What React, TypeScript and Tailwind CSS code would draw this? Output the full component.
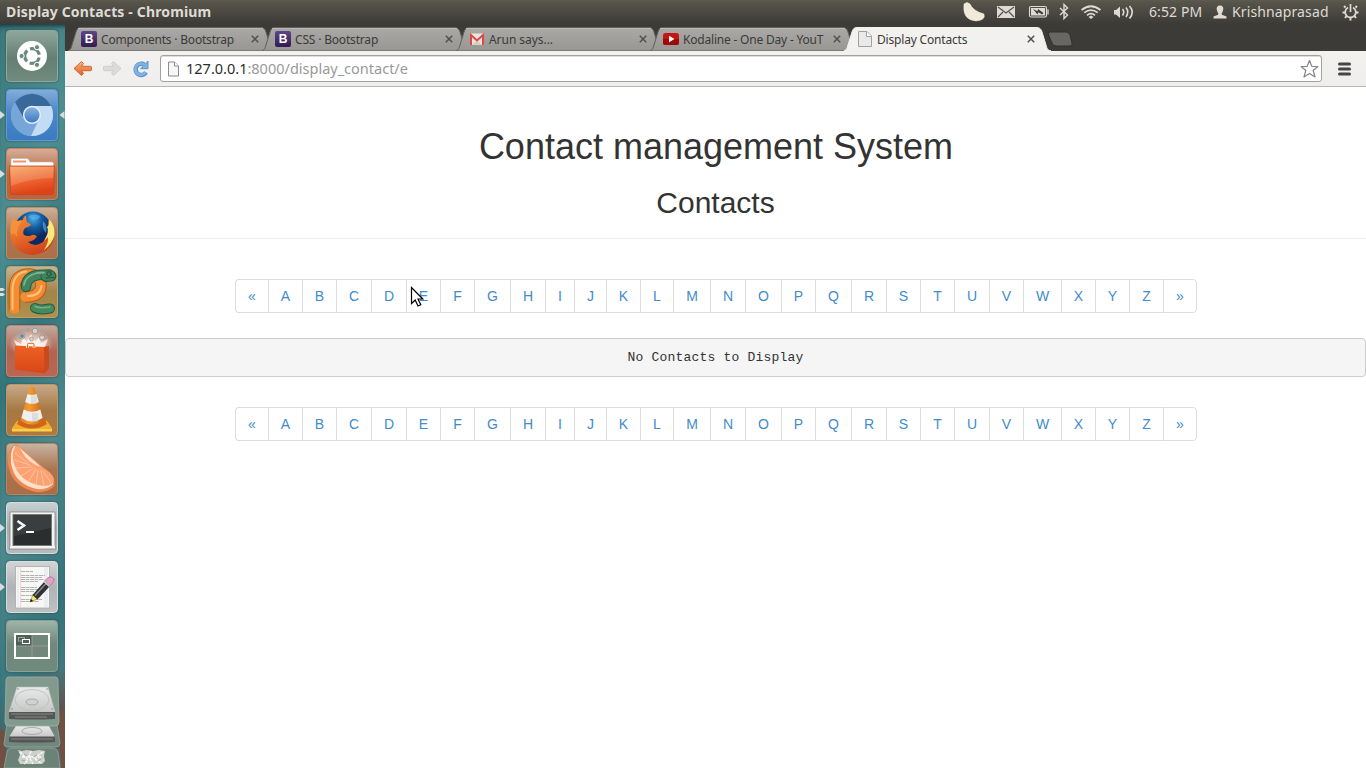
import React from "react";

const LETTERS = ["«", ..."ABCDEFGHIJKLMNOPQRSTUVWXYZ".split(""), "»"];

/* ---------- Launcher icons (52 x 52 grid) ---------- */

const Ubuntu = () => (
  <>
    <circle cx="26" cy="26" r="15" fill="#fff" />
    <circle cx="26" cy="26" r="7.3" fill="none" stroke="#6c897e" strokeWidth="3.2" strokeDasharray="12.3 3" strokeDashoffset="-1.5" />
    <g fill="#6c897e" stroke="#fff" strokeWidth="1">
      <circle cx="15.6" cy="26" r="2.6" />
      <circle cx="31" cy="17.2" r="2.6" />
      <circle cx="31" cy="34.8" r="2.6" />
    </g>
  </>
);

const ChromiumIcon = () => (
  <>
    <circle cx="26" cy="26" r="21" fill="#8fb9e2" />
    <path d="M26 17H45A21 21 0 0 1 25 47L33 31Z" fill="#c2dcf4" />
    <path d="M9 13.5A21 21 0 0 1 45 17H26A9 9 0 0 0 17.5 29Z" fill="#39689b" />
    <path d="M9 13.5 17.5 30A9 9 0 0 0 30.500 34L25 47A21 21 0 0 1 9 13.5Z" fill="#76a6d8" />
    <circle cx="26" cy="25.8" r="9" fill="#e8f2fc" />
    <circle cx="26" cy="25.8" r="7.6" fill="url(#ball)" />
  </>
);

const Folder = () => (
  <>
    <path d="M5 19V11.5Q5 10.5 6 10.5H21Q22.500 10.500 23 12L24 14H46Q47.500 14 47.500 15.500V19Z" fill="#fff" stroke="#d4b39f" strokeWidth=".6" />
    <rect x="7" y="12.500" width="13" height="2" fill="#ee9563" />
    <path d="M3.500 18H48.500L47.500 45.500Q47.400 46.500 46.400 46.500H5.600Q4.600 46.500 4.500 45.500Z" fill="url(#folder)" stroke="#c8441e" strokeWidth=".8" />
    <path d="M4.300 19H47.700L47.200 30Q25 30 5 38Z" fill="#fff" opacity=".16" />
  </>
);

const Firefox = () => (
  <>
    <circle cx="27" cy="23" r="18.500" fill="url(#globe)" />
    <path d="M22 9Q28 6 34 9 33 14 25 12ZM37 14Q42 19 40 26 36 22 37 14Z" fill="#5db4ec" opacity=".6" />
    <path d="M6.500 11 11 14Q14 13 17 13 17 10 20 8.500 20 13 21 15 25 17 25 18 23 20 19 21 16 25 18 28 23 30 26 28 29 27 31 29.500 28 34 22 35 29 41 37 35 44 28 42 13 50 23 48 31 45 46 27 48 11 47 6 35 3 28 5 21 5 16 6.500 11Z" fill="url(#fox)" />
    <path d="M43 12Q49 18 48.500 28 46 37 38 43 43 35 42 30L38 34Q44 24 41 20Q44 18 43 12Z" fill="#fbe97a" />
    <path d="M6.500 11 11 14 16 14Q10 22 11 30 8 24 5 28 3 19 6.500 11Z" fill="#f59a42" opacity=".7" />
  </>
);

const PyCharm = () => (
  <g fill="none" strokeLinecap="round" strokeLinejoin="round">
    <path d="M29 42Q34 44.500 44 42.500" stroke="#235c3c" strokeWidth="10" />
    <path d="M29 42Q34 44.500 44 42.500" stroke="#47885f" strokeWidth="8" />
    <path d="M29 40.500Q34 42.500 44 41" stroke="#74b088" strokeWidth="1.500" />
    <path d="M8.500 43.500V22Q9 8 23 8 35 9 35 20 34 31 19 31" stroke="#b95812" strokeWidth="11.500" strokeLinecap="butt" />
    <path d="M8.500 43V22Q9 8 23 8 35 9 35 20 34 31 19 31" stroke="#f58c32" strokeWidth="9.500" />
    <path d="M6.500 43V22Q8 7 20 5.500M22 30Q34 30 35.500 20" stroke="#ffc17c" strokeWidth="2" />
    <path d="M20 21Q20 11 32 9L43 8.500" stroke="#235c3c" strokeWidth="10.500" />
    <path d="M20 21Q20 11 32 9L43 8.500" stroke="#428460" strokeWidth="8.500" />
    <path d="M40 10.500 45 10" stroke="#235c3c" strokeWidth="11" />
    <path d="M40 10 44.500 10" stroke="#428460" strokeWidth="9.500" />
    <path d="M18 19Q19 10 31 7L38 6.500" stroke="#79b58f" strokeWidth="1.800" />
    <circle cx="43" cy="8" r="2.200" stroke="#1e4f37" />
    <path d="M40 12 48 11.500" stroke="#1e4f37" strokeWidth=".9" />
  </g>
);

const Bag = () => (
  <>
    <ellipse cx="25" cy="19" rx="22" ry="14" fill="url(#glow)" />
    <path d="M11 22 8 15 15 19 17 12 21 17 25 9 29 17 33 12 35 18 42 14 39 22Z" fill="#fff" opacity=".75" />
    <g fill="#d0d3d4" stroke="#84807f" strokeWidth=".6">
      <circle cx="16" cy="11" r="3" /><circle cx="29" cy="6" r="2.800" /><circle cx="25.500" cy="14" r="2" /><circle cx="36" cy="12.500" r="2.500" /><circle cx="42" cy="8" r="1" /><circle cx="22" cy="5" r="1" />
    </g>
    <circle cx="16" cy="11" r="2" fill="#6489a5" />
    <path d="M9 20.500 38 22 43 21V43L38.500 48.500 9 44.500Z" fill="url(#bag)" />
    <path d="M38 22 43 21V43L38.500 48.500Z" fill="#c94a20" />
    <path d="M21.500 23V19.300Q21.500 18.300 22.500 18.300H27Q28 18.300 28 19.300V23" fill="none" stroke="#fff0df" strokeWidth="2.600" />
    <path d="M21.500 23V19.300Q21.500 18.300 22.500 18.300H27Q28 18.300 28 19.300V23" fill="none" stroke="#e0622e" strokeWidth="1" />
  </>
);

const Vlc = () => (
  <>
    <path d="M11 37H41L46 44V47H6V44Z" fill="#f5ad2b" />
    <path d="M6 45H46V47.500H6Z" fill="#fcd04a" />
    <path d="M14 34Q26 42 38 34L41 40Q26 49 11 40Z" fill="#cf651b" />
    <path d="M23.500 4Q26 2 28.500 4L37.500 37Q26 44 14.500 37Z" fill="url(#cone)" />
    <path d="M21.500 10Q26 12 30.500 10L32.800 18Q26 22 19.200 18ZM17.700 25.500Q26 30 34.300 25.500L36.600 34Q26 41 15.400 34Z" fill="#eef0ef" />
    <path d="M28 11.500V20M29 29V38" stroke="#c7cac9" strokeWidth="6" opacity=".45" />
  </>
);

const Clementine = () => (
  <>
    <path d="M8 2Q1 7 2 21 5 43 29 49 42 50 48 43 50 38 45 31L13 3Q10 1 8 2Z" fill="#ec8953" />
    <path d="M8 3Q4 8 5 20 8 41 31 46 42 47 47 41L45 33 13 4Z" fill="#ffe0ca" />
    <path d="M10 3Q14 3 16 9 22 20 35 24 46 29 48 36 48 43 38 43 12 40 7 17 6 7 10 3Z" fill="#fba172" />
    <path d="M9 10 22 20M8 17 24 22M10 25 26 24M15 33 28 25M22 39 30 26M30 42 32 27M38 43 35 27M45 40 37 28" stroke="#ffceb1" strokeWidth=".7" />
  </>
);

const Terminal = () => (
  <>
    <path d="M4 10H49V43L50 47H3L4 43Z" fill="#f4f4f3" stroke="#777" strokeWidth=".7" />
    <rect x="7" y="12.500" width="38.500" height="31" fill="#2b2e2e" stroke="#777" />
    <path d="M8 13H45V26L8 34Z" fill="#fff" opacity=".08" />
    <path d="M11.500 19 18 23.500 11.500 28" fill="none" stroke="#fff" strokeWidth="2.500" />
    <path d="M20 30H28" stroke="#fff" strokeWidth="2" />
  </>
);

const Editor = () => (
  <>
    <rect x="9.500" y="5.500" width="34" height="41.500" fill="#f7f7f6" stroke="#aaa" strokeWidth=".8" />
    <path d="M14.500 6V47" stroke="#f1c8c5" strokeWidth=".8" />
    <path d="M12 6V47M39 6V47M41 6V47" stroke="#d3deee" strokeWidth=".7" />
    <path d="M15 10.500H27M15 14.500H39M15 16.500H36M15 18.500H38M15 20.500H32M15 26.500H31M15 28.500H34M15 30.500H28M15 34.500H31M15 38.500H36M15 40.500H33" stroke="#b0b2b3" strokeWidth="1" strokeDasharray="4 .5" />
    <path d="M24 41 27 33.500 31.500 38Z" fill="#f2e660" stroke="#7e7934" strokeWidth=".6" />
    <path d="M26.500 34 38 21 43.500 25.500 31.500 38.500Z" fill="#303132" />
    <path d="M29 34.500 40 22.500" stroke="#858887" strokeWidth="1.500" />
    <path d="M38.500 20 41 17.500Q45 14 48 18 48.500 20 44 25Z" fill="#e59fc6" stroke="#9c7489" strokeWidth=".7" />
    <path d="M38 20.500 43.500 25.500" stroke="#ccc" strokeWidth="1.600" />
    <path d="M24 41 25 38 27 40Z" fill="#111" />
  </>
);

const Workspaces = () => (
  <>
    <rect x="9" y="14" width="34" height="24" fill="#72877c" />
    <rect x="9" y="14" width="17" height="12" fill="#4e6058" />
    <path d="M26 14V38M9 26H43" stroke="#a69da3" strokeWidth=".8" />
    <rect x="9" y="14" width="34" height="24" fill="none" stroke="#fff" strokeWidth="2" />
    <rect x="12.500" y="17.500" width="6" height="3.500" fill="none" stroke="#9aa39f" />
    <rect x="16.500" y="19.500" width="7" height="4" fill="#4e6058" stroke="#fff" />
  </>
);

const TILES: { name: string; bg: string; arrow?: string; Icon: React.FC }[] = [
  { name: "home", bg: "bg-[linear-gradient(#8fa69c,#647e72_55%,#718b80)] border-[#91a79d]", Icon: Ubuntu },
  { name: "chromium", bg: "bg-[linear-gradient(#83acd9,#4c87c8_45%,#3c7bc1)] border-[#5e98d8]", arrow: "both", Icon: ChromiumIcon },
  { name: "files", bg: "bg-[linear-gradient(#d5ad98,#b66943_50%,#b7673f)] border-[#cb835f]", arrow: "left", Icon: Folder },
  { name: "firefox", bg: "bg-[linear-gradient(#ceb097,#a87854_50%,#ac7048)] border-[#bd8d68]", Icon: Firefox },
  { name: "pycharm", bg: "bg-[linear-gradient(#c5b394,#a28349_50%,#b2904c)] border-[#baa169]", arrow: "double", Icon: PyCharm },
  { name: "software", bg: "bg-[linear-gradient(#c0aaa0,#ae6652_50%,#bb6651)] border-[#c9806c]", Icon: Bag },
  { name: "vlc", bg: "bg-[linear-gradient(#c6aa88,#a77843_50%,#ae7840)] border-[#c19562]", Icon: Vlc },
  { name: "clementine", bg: "bg-[linear-gradient(#c7b3a2,#aa754f_50%,#ac6d44)] border-[#bb845d]", Icon: Clementine },
  { name: "terminal", bg: "bg-[linear-gradient(#c6cfd1,#a6acae_50%,#b7bbbd)] border-[#d7dcdd]", arrow: "left", Icon: Terminal },
  { name: "editor", bg: "bg-[linear-gradient(#d0d4d5,#b0b4b6_50%,#bec0c1)] border-[#d8dcdc]", arrow: "left", Icon: Editor },
  { name: "workspaces", bg: "bg-[linear-gradient(#9fb5a9,#71887c_45%,#708a7e)] border-[#88a195]", Icon: Workspaces },
];

function Defs() {
  return (
    <svg className="absolute h-0 w-0" aria-hidden="true">
      <defs>
        <linearGradient id="ball" x2="0" y2="1"><stop stopColor="#8ab4e4" /><stop offset="1" stopColor="#3f79be" /></linearGradient>
        <linearGradient id="folder" x2=".3" y2="1"><stop stopColor="#f5a359" /><stop offset=".55" stopColor="#ee6831" /><stop offset="1" stopColor="#df4217" /></linearGradient>
        <radialGradient id="globe" cx=".5" cy=".2"><stop stopColor="#4aa9e4" /><stop offset=".5" stopColor="#125b9f" /><stop offset="1" stopColor="#0b2a61" /></radialGradient>
        <radialGradient id="glow"><stop stopColor="#fff" /><stop offset=".5" stopColor="#ffe6d4" stopOpacity=".6" /><stop offset="1" stopColor="#ffe6d4" stopOpacity="0" /></radialGradient>
        <linearGradient id="fox" x2=".4" y2="1"><stop stopColor="#ee8a34" /><stop offset=".5" stopColor="#e8702a" /><stop offset="1" stopColor="#d2451c" /></linearGradient>
        <linearGradient id="bag" x2="0" y2="1"><stop stopColor="#ed6222" /><stop offset="1" stopColor="#d94618" /></linearGradient>
        <linearGradient id="cone"><stop stopColor="#e88125" /><stop offset=".4" stopColor="#f69a2f" /><stop offset="1" stopColor="#c96212" /></linearGradient>
        <linearGradient id="metal" x2="0" y2="1"><stop stopColor="#e9eae9" /><stop offset="1" stopColor="#c6c8c7" /></linearGradient>
        <linearGradient id="tab" x2="0" y2="1"><stop stopColor="#aaa9a7" /><stop offset="1" stopColor="#979693" /></linearGradient>
        <linearGradient id="back" x2="0" y2="1"><stop stopColor="#f8b27c" /><stop offset="1" stopColor="#df6325" /></linearGradient>
      </defs>
    </svg>
  );
}

function Launcher() {
  return (
    <aside className="flex w-[65px] shrink-0 flex-col overflow-hidden bg-[radial-gradient(circle_at_80%_94%,#6a4038_0,#6a403800_8%),linear-gradient(115deg,#3b777b,#4e8e91_25%,#34757b_42%,#4d898d_60%,#35727a_80%,#5b8083)] pt-[6px] shadow-[inset_0_6px_5px_-4px_#173234]">
      <div className="flex flex-col gap-[7px]">
        {TILES.map(({ name, bg, arrow, Icon }) => (
          <div key={name} className="flex h-[52px] items-center">
            <div className="w-[6px]">
              {arrow && (
                <svg width="6" height="10" viewBox="0 0 6 10">
                  <path d={arrow === "double" ? "M0 1H3L5 2.500 3 4H0ZM0 6H3L5 7.500 3 9H0Z" : "M0 1 5 5 0 9Z"} fill="#d9dddd" />
                </svg>
              )}
            </div>
            <div className={`h-[52px] w-[52px] rounded-[4px] border shadow-[0_0_2px_#24484b] ${bg}`}>
              <svg className="-m-px max-w-none" width="52" height="52" viewBox="0 0 52 52"><Icon /></svg>
            </div>
            {arrow === "both" && <svg width="7" height="10" viewBox="0 0 7 10"><path d="M6.500 1 1.500 5 6.500 9Z" fill="#d9dddd" /></svg>}
          </div>
        ))}
      </div>
      <svg className="mt-[4px] shrink-0" width="65" height="92" viewBox="0 0 65 92">
        <path d="M0 53H4L8 92H0ZM58 35H65V92H61Z" fill="#6e5143" />
        <path d="M11 72H53Q58 73 58 76L60 92H4L7 76Q7 73 11 72Z" fill="#6b8276" stroke="#93a69c" strokeWidth=".8" />
        <path d="M18 74 22 75 27 74 33 75 39 74 45 75 44 80 45 85 42 88 20 88 18 84 20 79Z" fill="#cdd1ce" />
        <path d="M20 76 28 84 24 88M43 76 34 82 41 87M31 75 29 81 33 88M22 81H42" fill="none" stroke="#f7f8f7" strokeWidth="1.500" strokeDasharray="3 1" />
        <path d="M24 78 27 80M37 79 34 81M25 85 22 84M38 85 41 83" stroke="#9ba39e" />
        <path d="M7 48H57L60 67Q60 71 56 71H8Q4 71 4 68Z" fill="#6f887b" stroke="#94a89e" strokeWidth=".8" />
        <path d="M16 50H49L55 61H9Z" fill="url(#metal)" /><path d="M9 60.500H55V66Q32 67 9 66Z" fill="#555" /><path d="M11 63H53" stroke="#888" />
        <ellipse cx="32" cy="55" rx="10" ry="3.500" fill="none" stroke="#aaa" />
        <path d="M9 1H55Q58 1 58 4L59 46Q59 50 55 50H9Q5 50 5 46L6 4Q6 1 9 1Z" fill="#829a8e" stroke="#9eb1a7" strokeWidth=".8" />
        <path d="M17 11H48L55 36H9Z" fill="url(#metal)" stroke="#b7bcb9" strokeWidth=".6" />
        <path d="M9 36H55V43Q32 44 9 43Z" fill="#555755" /><path d="M11 38H53M15 41H47" stroke="#888" />
        <ellipse cx="32" cy="24" rx="17" ry="10.500" fill="none" stroke="#c0c3c1" />
        <ellipse cx="32" cy="26" rx="6" ry="3" fill="#d0d2d1" stroke="#a6aaa7" />
        <circle cx="18" cy="13" r=".8" fill="#888" /><circle cx="47" cy="13" r=".8" fill="#888" /><circle cx="12" cy="33" r=".8" fill="#888" /><circle cx="52" cy="33" r=".8" fill="#888" />
      </svg>
    </aside>
  );
}

/* ---------- System panel ---------- */

function TopPanel() {
  return (
    <header className="relative flex h-6 shrink-0 items-center justify-between bg-[linear-gradient(#5d5a4d,#55534a_12%,#3c3b37)] pl-[6px] font-['Noto_Sans'] text-[#dfdbd2]">
      <span className="text-[14px] leading-6 font-bold tracking-[0.15px] whitespace-nowrap">Display Contacts - Chromium</span>
      <svg className="absolute top-0 left-[960px]" width="180" height="24" viewBox="960 0 180 24" fill="none" stroke="#dfdbd2">
        <path d="M964 4Q967 1 970 4 973 11 984 14 986 20 976 21 962 20 964 4Z" fill="#f0ead9" stroke="#f7eddb" strokeWidth=".5" />
        <rect x="997" y="6" width="18" height="12" fill="#dfdbd2" stroke="none" />
        <path d="M998 7 1006 13 1014 7M998 17 1003 12M1014 17 1009 12" stroke="#55524c" strokeWidth="1.200" />
        <rect x="1029.500" y="6.500" width="17" height="10.500" rx="1.500" strokeWidth="1.100" />
        <rect x="1031" y="8" width="14" height="7.500" fill="#dfdbd2" stroke="none" />
        <path d="M1048 9.500V14.500" strokeWidth="1.300" />
        <path d="M1033 9 1037.500 11.200 1038 9 1043.500 13 1042 14.500 1038.500 12.300 1037.500 14.500Z" fill="#3f3d39" stroke="none" />
        <path d="M1060 8 1067.500 15 1064 18.500V4.500L1067.500 8 1060 15" strokeWidth="1.400" />
        <path d="M1081.500 10Q1091 2.500 1100.500 10M1084.300 12.700Q1091 7.500 1097.700 12.700M1087 15.300Q1091 12 1095 15.300" strokeWidth="1.700" />
        <path d="M1088.500 17 1091 15.500 1093.500 17 1091 19Z" fill="#dfdbd2" stroke="none" />
        <path d="M1114 10H1116L1120 6.500V18L1116 14.500H1114Z" fill="#dfdbd2" stroke="none" />
        <path d="M1122.500 9Q1125 12 1122.500 15.500M1126 7.500Q1129.500 12 1126 17M1129.500 6Q1135 12 1129.500 18.500" strokeWidth="1.600" />
      </svg>
      <div className="flex items-center pr-[7px] text-[14px] leading-6 whitespace-nowrap">
        <span className="w-[64px] tracking-[0.1px]">6:52 PM</span>
        <svg width="14" height="14" viewBox="0 0 14 14" className="mr-[5px]"><path d="M7 .5C10 .5 10.800 3 10 5.500Q9.500 7.500 8.700 8.200L8.900 9.800 13.500 11.500V13.500H.5V11.500L5.100 9.800 5.300 8.200Q4.500 7.500 4 5.500C3.200 3 4 .5 7 .5Z" fill="#dfdbd2" /></svg>
        <span className="w-[110px] tracking-[0.12px]">Krishnaprasad</span>
        <svg width="17" height="18" viewBox="0 0 17 18" fill="none" stroke="#dfdbd2" strokeWidth="1.700">
          <path d="M6 4.500A5.300 5.300 0 1 0 11 4.500M8.500 1V9" />
          <path d="M3.500 4.500 2 3M13.500 4.500 15 3M3 9.500H.5M14 9.500H16.500M4.500 13 3 15M12.500 13 14 15M8.500 15V17.500" strokeWidth="2" />
        </svg>
      </div>
    </header>
  );
}

/* ---------- Browser chrome ---------- */

const BootstrapIcon = () => (
  <span className="flex h-4 w-4 items-center justify-center rounded-[2px] bg-[linear-gradient(#5e4688,#321b4f)] font-['Liberation_Sans'] text-[12px] leading-4 font-bold text-white">B</span>
);
const GmailIcon = () => (
  <svg width="16" height="16" viewBox="0 0 16 16"><path d="M1 2.500H15V14H1Z" fill="#ece4e0" /><path d="M3 14 8 9 13 14" fill="#d5cfcb" /><path d="M2 14V4L8 9.500 14 4V14" fill="none" stroke="#dc4a41" strokeWidth="2" /></svg>
);
const YoutubeIcon = () => (
  <svg width="16" height="16" viewBox="0 0 16 16"><rect y="2" width="16" height="12" rx="2.500" fill="#c51414" /><path d="M0 8H16V11.500Q16 14 13.500 14H2.500Q0 14 0 11.500Z" fill="#9f0909" /><path d="M6 4.800 11.500 8 6 11.200Z" fill="#fff" /></svg>
);
const PageIcon = () => (
  <svg width="16" height="16" viewBox="0 0 16 16"><path d="M1.500.5H10L14.500 5V15.500H1.500Z" fill="#e9e9e9" stroke="#a0a0a0" /><path d="M9.500.5V5.500H14.500" fill="#fff" stroke="#a0a0a0" /></svg>
);

const TABS = [
  { label: "Components · Bootstrap", Icon: BootstrapIcon, track: "tracking-[-0.2px]" },
  { label: "CSS · Bootstrap", Icon: BootstrapIcon, track: "tracking-[-0.18px]" },
  { label: "Arun says...", Icon: GmailIcon, track: "tracking-[-0.05px]" },
  { label: "Kodaline - One Day - YouT", Icon: YoutubeIcon, track: "tracking-[-0.2px]" },
  { label: "Display Contacts", Icon: PageIcon, track: "tracking-[-0.18px]", active: true },
];

function TabStrip() {
  return (
    <div className="flex h-[27px] shrink-0 items-end bg-[#3c3b37] pl-[3px]">
      {TABS.map(({ label, Icon, track, active }) => (
        <div key={label} className={`relative flex h-[24px] w-[194px] items-center pl-[13px] ${active ? "z-10" : ""}`}>
          <svg className="absolute top-0 left-0" width="208" height="24" viewBox="0 0 208 24">
            <path d="M-1 24C3 23 3 21 4 18L8 5C9 2 10 .5 13 .5H192C196 .5 197 2 198 5L202 18C203 21 203 23 207 24Z" fill={active ? "#f2f1f0" : "url(#tab)"} stroke={active ? "#f2f1f0" : "#62615e"} />
            {!active && <path d="M10 1.500H195" stroke="#bab9b7" />}
          </svg>
          <div className="relative flex w-full items-center">
            <Icon />
            <span className={`ml-[4px] pt-px font-['Noto_Sans'] text-[12px] leading-[20px] whitespace-nowrap text-[#3c3b37] ${track}`}>{label}</span>
          </div>
          <span className="absolute top-[2px] -right-[7px] flex h-5 w-[18px] items-center">
            <svg width="8" height="8" viewBox="0 0 8 8"><path d="M.8.8 7.200 7.200M7.200.8.8 7.200" stroke="#51504d" strokeWidth="1.500" /></svg>
          </span>
        </div>
      ))}
      <svg className="mb-[3px] ml-[8px]" width="28" height="18" viewBox="0 0 28 18"><path d="M4 2H20Q23 2 24 5L26 13Q27 16 24 16H10Q7 16 6 13L2.500 5Q1.500 2 4 2Z" fill="#686763" stroke="#31302d" /></svg>
    </div>
  );
}

function Toolbar() {
  return (
    <div className="flex h-[36px] shrink-0 items-center border-b border-[#b9b7b5] bg-[linear-gradient(#f2f1f0,#f0eeed)] pl-[8px]">
      <svg width="20" height="18" viewBox="0 0 20 18"><path d="M1 8.500 8.500 1.500 10.500 3.500 8.500 6.300H17.500Q18.500 6.300 18.500 7.300V9.700Q18.500 10.700 17.500 10.700H8.500L10.500 13.500 8.500 15.500Z" fill="url(#back)" stroke="#c95e25" strokeWidth=".9" strokeLinejoin="round" /></svg>
      <svg className="ml-[9px]" width="20" height="18" viewBox="0 0 20 18"><path d="M19 8.500 11.500 1.500 9.500 3.500 11.500 6.300H2.500Q1.500 6.300 1.500 7.300V9.700Q1.500 10.700 2.500 10.700H11.500L9.500 13.500 11.500 15.500Z" fill="#dcdbd9" stroke="#cccbc9" strokeWidth=".9" strokeLinejoin="round" /></svg>
      <svg className="ml-[10px]" width="18" height="18" viewBox="0 0 18 18"><path d="M12.500 4.800A5.600 5.600 0 1 0 14 12.300" fill="none" stroke="#5590c8" strokeWidth="4.400" /><path d="M16 1V8.700H8.500L11 6.500 13.500 4Z" fill="#7fb2e3" stroke="#5590c8" strokeWidth=".9" /><path d="M12.800 5.200A5.600 5.600 0 1 0 13.700 12" fill="none" stroke="#7fb2e3" strokeWidth="2.800" /></svg>
      <div className="ml-[10px] flex h-[27px] w-[1162px] items-center rounded-[3px] border border-[#a3a19e] bg-white pl-[6px] shadow-[inset_0_1px_0_#ddd]">
        <svg width="13" height="16" viewBox="0 0 13 16"><path d="M1.500 1H7.500L11.500 5V15H1.500Z" fill="#f7f7f7" stroke="#8b8b8b" /><path d="M7.500 1V5H11.500" fill="#fff" stroke="#8b8b8b" /></svg>
        <span className="ml-[6px] font-['Noto_Sans'] text-[14.500px] leading-[25px] text-[#999]"><span className="text-[#2c2c2c]">127.0.0.1</span>:8000/display_contact/e</span>
        <svg className="mr-[2px] ml-auto" width="20" height="20" viewBox="0 0 20 20"><path d="M10.500 1.500 12.800 7.300 18.800 7.500 14.200 11.500 16 18 10.500 14.500 5 18 6.800 11.500 2.200 7.500 8.200 7.300Z" fill="#fff" stroke="#858585" strokeWidth="1.200" strokeLinejoin="round" /></svg>
      </div>
      <svg className="ml-[16px]" width="13" height="14" viewBox="0 0 13 14"><path d="M1.500 2H11.500M1.500 7H11.500M1.500 12H11.500" stroke="#454545" strokeWidth="3" strokeLinecap="round" /></svg>
    </div>
  );
}

/* ---------- Page ---------- */

function Pagination() {
  return (
    <ul className="grid grid-cols-[33px_34px_34px_35px_35px_34px_34px_36px_35px_29px_32px_34px_33px_37px_35px_36px_34px_36px_35px_34px_34px_35px_34px_38px_34px_34px_34px_34px] justify-center pl-px text-[14px] leading-[20px] text-[#428bca]">
      {LETTERS.map((c) => (
        <li key={c} className="border-y border-l border-[#ddd] bg-white py-[6px] text-center first:rounded-l-[4px] last:rounded-r-[4px] last:border-r">{c}</li>
      ))}
    </ul>
  );
}

function Page() {
  return (
    <main className="relative flex-1 bg-white font-['Liberation_Sans',sans-serif] text-[#333]">
      <h1 className="pt-[40px] pl-px text-center text-[36px] leading-[40px] font-medium">Contact management System</h1>
      <h2 className="mt-[19px] text-center text-[30px] leading-[33px] font-medium">Contacts</h2>
      <hr className="mt-[19px] mb-[40px] border-t border-[#eee]" />
      <Pagination />
      <pre className="mt-[25px] mb-[30px] flex h-[39px] items-center justify-center rounded-[4px] border border-[#ccc] bg-[#f5f5f5] font-['Liberation_Mono',monospace] text-[13px] leading-[19px] tracking-[0.2px] text-[#333]">No Contacts to Display</pre>
      <Pagination />
      <svg className="absolute top-[199px] left-[345px]" width="14" height="22" viewBox="0 0 14 22"><path d="M1.500 1.500V17.500L5.200 14 8 20 10.800 18.700 8 13H12.800Z" fill="#fff" stroke="#000" strokeWidth="1.200" /></svg>
    </main>
  );
}

export default function App() {
  return (
    <div className="flex h-[768px] w-[1366px] flex-col overflow-hidden">
      <Defs />
      <TopPanel />
      <div className="flex min-h-0 flex-1">
        <Launcher />
        <div className="flex min-w-0 flex-1 flex-col">
          <TabStrip />
          <Toolbar />
          <Page />
        </div>
      </div>
    </div>
  );
}
